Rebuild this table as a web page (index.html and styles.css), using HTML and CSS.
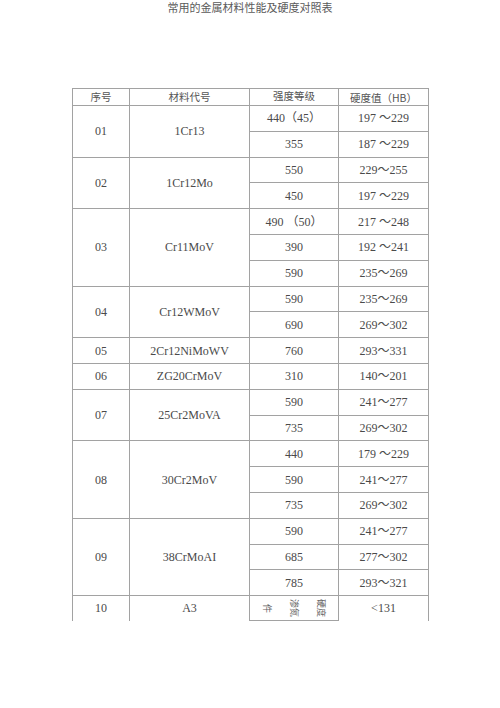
FILE: index.html
```html
<!DOCTYPE html>
<html lang="zh-CN">
<head>
<meta charset="utf-8">
<title>常用的金属材料性能及硬度对照表</title>
<link rel="stylesheet" href="styles.css">
</head>
<body>
<div class="page">
  <h1 class="title">常用的金属材料性能及硬度对照表</h1>
  <table class="grid">
    <colgroup>
      <col class="c1"><col class="c2"><col class="c3"><col class="c4">
    </colgroup>
    <thead>
      <tr class="head">
        <th>序号</th><th>材料代号</th><th class="up">强度等级</th><th class="down">硬度值（HB）</th>
      </tr>
    </thead>
    <tbody>
      <tr><td rowspan="2">01</td><td rowspan="2">1Cr13</td><td>440（45）</td><td>197 ～229</td></tr>
      <tr><td>355</td><td>187 ～229</td></tr>
      <tr><td rowspan="2">02</td><td rowspan="2">1Cr12Mo</td><td>550</td><td>229～255</td></tr>
      <tr><td>450</td><td>197 ～229</td></tr>
      <tr><td rowspan="3">03</td><td rowspan="3">Cr11MoV</td><td>490 （50）</td><td>217 ～248</td></tr>
      <tr><td>390</td><td>192 ～241</td></tr>
      <tr><td>590</td><td>235～269</td></tr>
      <tr><td rowspan="2">04</td><td rowspan="2">Cr12WMoV</td><td>590</td><td>235～269</td></tr>
      <tr><td>690</td><td>269～302</td></tr>
      <tr><td>05</td><td>2Cr12NiMoWV</td><td>760</td><td>293～331</td></tr>
      <tr><td>06</td><td>ZG20CrMoV</td><td>310</td><td>140～201</td></tr>
      <tr><td rowspan="2">07</td><td rowspan="2">25Cr2MoVA</td><td>590</td><td>241～277</td></tr>
      <tr><td>735</td><td>269～302</td></tr>
      <tr><td rowspan="3">08</td><td rowspan="3">30Cr2MoV</td><td>440</td><td>179 ～229</td></tr>
      <tr><td>590</td><td>241～277</td></tr>
      <tr><td>735</td><td>269～302</td></tr>
      <tr><td rowspan="3">09</td><td rowspan="3">38CrMoAI</td><td>590</td><td>241～277</td></tr>
      <tr><td>685</td><td>277～302</td></tr>
      <tr><td>785</td><td>293～321</td></tr>
      <tr class="last"><td>10</td><td>A3</td><td class="closed"><div class="vert">硬度渗氮件</div></td><td>&lt;131</td></tr>
    </tbody>
  </table>
</div>
</body>
</html>
```

FILE: styles.css
```css
html, body {
  margin: 0;
  padding: 0;
  background: #ffffff;
}

.page {
  width: 500px;
  height: 708px;
  overflow: hidden;
  font-family: "Liberation Serif", "Noto Sans CJK SC", serif;
  color: #4a4a4a;
}

.title {
  margin: 0;
  padding-top: 1px;
  height: 88px;
  box-sizing: border-box;
  text-align: center;
  font-family: "Noto Sans CJK SC", sans-serif;
  font-weight: 400;
  font-size: 11px;
  line-height: 13px;
  color: #5a5a5a;
}

.grid {
  margin-left: 72px;
  border-collapse: collapse;
  table-layout: fixed;
  width: 356px;
}

.c1 { width: 57px; }
.c2 { width: 120px; }
.c3 { width: 89px; }
.c4 { width: 90px; }

.grid th,
.grid td {
  border: 1px solid #a2a2a2;
  padding: 0;
  text-align: center;
  vertical-align: middle;
  font-size: 12px;
  line-height: 14px;
  font-weight: 400;
  white-space: nowrap;
}

.grid th {
  font-family: "Noto Sans CJK SC", sans-serif;
  font-size: 10.5px;
  color: #555;
}

.head {
  height: 17px;
}

.grid th.up { vertical-align: top; line-height: 13px; }
.grid th.down { vertical-align: bottom; line-height: 14px; }

.grid tbody tr {
  height: 25.8px;
}

.grid tr.last {
  height: 25px;
}

.grid tr.last td {
  border-bottom: none;
}

.grid tr.last td.closed {
  border-bottom: 1px solid #a2a2a2;
}

.vert {
  margin: 0 auto;
  height: 20px;
  width: 81px;
  writing-mode: vertical-rl;
  text-orientation: sideways;
  white-space: normal;
  word-break: break-all;
  font-family: "Noto Sans CJK SC", sans-serif;
  font-size: 9px;
  line-height: 27px;
  text-align: center;
  color: #666;
}
```
